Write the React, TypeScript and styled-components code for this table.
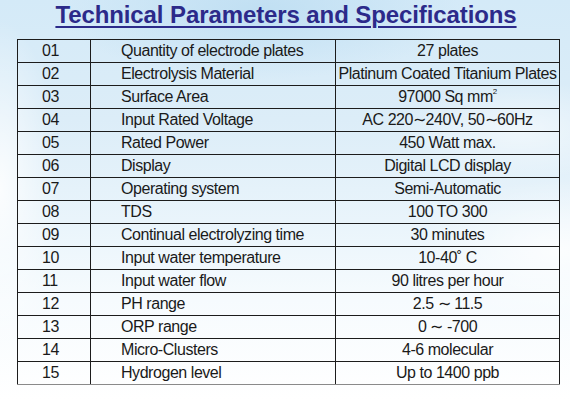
import React from "react";
import styled, { createGlobalStyle } from "styled-components";

const GlobalStyle = createGlobalStyle`
  html, body {
    margin: 0;
    padding: 0;
  }
  body {
    width: 570px;
    height: 400px;
    overflow: hidden;
    font-family: "Liberation Sans", Arial, sans-serif;
  }
`;

const Page = styled("div")`
  width: 570px;
  height: 400px;
  box-sizing: border-box;
  padding: 3px 11px 0 17px;
  display: flex;
  flex-direction: column;
  background:
    radial-gradient(ellipse 60px 170px at 0px 190px, rgba(255, 255, 255, 0.85), rgba(255, 255, 255, 0) 100%),
    radial-gradient(ellipse 140px 70px at 560px 250px, rgba(255, 255, 255, 0.8), rgba(255, 255, 255, 0) 100%),
    radial-gradient(ellipse 120px 50px at 520px 130px, rgba(255, 255, 255, 0.55), rgba(255, 255, 255, 0) 100%),
    radial-gradient(ellipse 200px 70px at 260px 10px, rgba(190, 222, 242, 0.9), rgba(190, 222, 242, 0) 100%),
    linear-gradient(180deg, #d4eaf8 0%, #dcedf8 30%, #e9f4fb 55%, #f6fbfe 75%, #ffffff 100%);
`;

const Title = styled("h1")`
  margin: 0 0 0 -4px;
  height: 36px;
  text-align: center;
  font-family: "Liberation Sans", Arial, sans-serif;
  font-weight: bold;
  font-size: 24px;
  line-height: 24px;
  letter-spacing: -0.1px;
  color: #2c2a8a;
  text-decoration: underline;
  text-decoration-thickness: 2px;
  text-underline-offset: 3px;
`;

const SpecTable = styled("table")`
  width: 542px;
  border-collapse: collapse;
  table-layout: fixed;
  font-family: "Liberation Sans", Arial, sans-serif;
  font-size: 16px;
  letter-spacing: -0.45px;
  color: #1a1a1a;
`;

const Row = styled("tr")`
  height: 23px;
  &:last-child td {
    border-bottom-color: #8a8a8a;
  }
`;

const Cell = styled("td")<{ $align?: "left" | "center"; $pad?: number }>`
  border: 1px solid #1c1c1c;
  padding: 0 0 0 ${(p) => p.$pad ?? 0}px;
  height: 22px;
  line-height: 22px;
  white-space: nowrap;
  text-align: ${(p) => p.$align ?? "left"};
`;

const Sup = styled("sup")`
  font-size: 8px;
  line-height: 0;
  vertical-align: 8px;
`;

type TSpec = {
  no: string;
  name: string;
  value: React.ReactNode;
};

const specs: TSpec[] = [
  { no: "01", name: "Quantity of electrode plates", value: "27 plates" },
  { no: "02", name: "Electrolysis Material", value: "Platinum Coated Titanium Plates" },
  {
    no: "03",
    name: "Surface Area",
    value: (
      <>
        97000 Sq mm<Sup>2</Sup>
      </>
    ),
  },
  { no: "04", name: "Input Rated Voltage", value: "AC 220∼240V, 50∼60Hz" },
  { no: "05", name: "Rated Power", value: "450 Watt max." },
  { no: "06", name: "Display", value: "Digital LCD display" },
  { no: "07", name: "Operating system", value: "Semi-Automatic" },
  { no: "08", name: "TDS", value: "100 TO 300" },
  { no: "09", name: "Continual electrolyzing time", value: "30 minutes" },
  { no: "10", name: "Input water temperature", value: "10-40˚ C" },
  { no: "11", name: "Input water flow", value: "90 litres per hour" },
  { no: "12", name: "PH range", value: "2.5 ∼ 11.5" },
  { no: "13", name: "ORP range", value: "0 ∼ -700" },
  { no: "14", name: "Micro-Clusters", value: "4-6 molecular" },
  { no: "15", name: "Hydrogen level", value: "Up to 1400 ppb" },
];

export default function App() {
  return (
    <>
      <GlobalStyle />
      <Page>
        <Title>Technical Parameters and Specifications</Title>
        <SpecTable>
          <colgroup>
            <col style={{ width: 73 }} />
            <col style={{ width: 245 }} />
            <col style={{ width: 224 }} />
          </colgroup>
          <tbody>
            {specs.map((s) => (
              <Row key={s.no}>
                <Cell $pad={24}>{s.no}</Cell>
                <Cell $pad={30}>{s.name}</Cell>
                <Cell $align="center">{s.value}</Cell>
              </Row>
            ))}
          </tbody>
        </SpecTable>
      </Page>
    </>
  );
}
